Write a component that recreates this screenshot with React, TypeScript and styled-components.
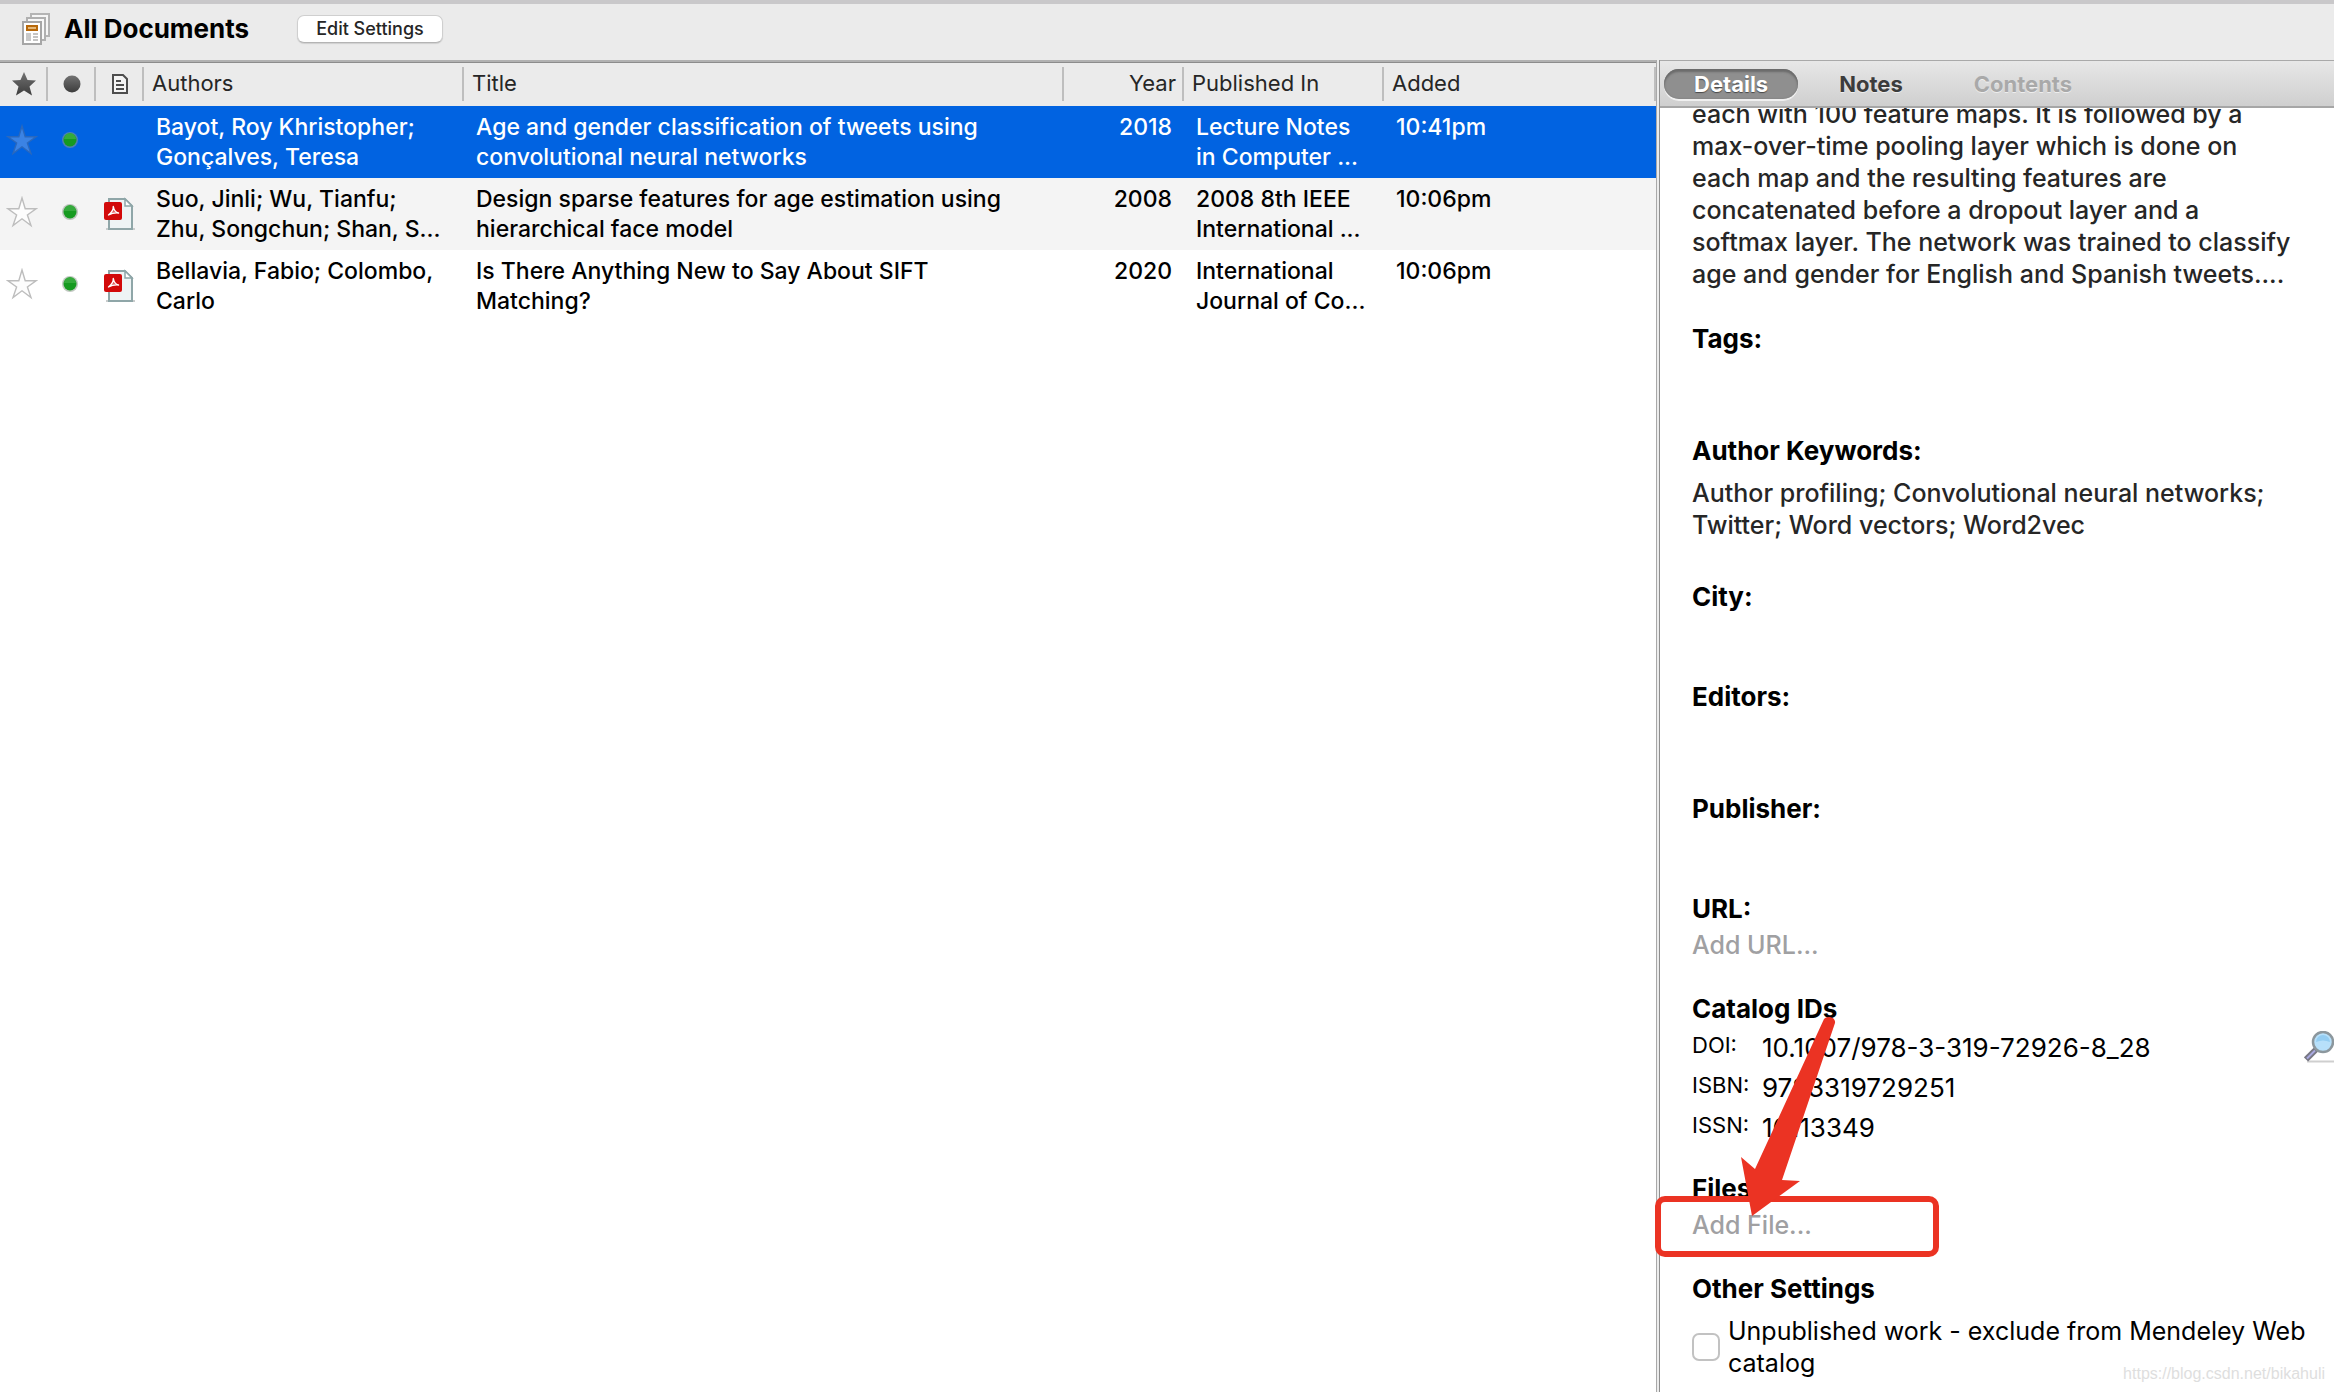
import React from "react";
import styled, { createGlobalStyle, css } from "styled-components";

const UI_FONT = `Inter, "Liberation Sans", sans-serif`;
const HELVETICA = `"Liberation Sans", Arial, sans-serif`;
const RED = "#eb3323";

const GlobalStyle = createGlobalStyle`
  *, *::before, *::after { box-sizing: border-box; }
  html, body { margin: 0; background: #fff; }
  body { font-family: ${UI_FONT}; color: #000; }
  button, input { font: inherit; color: inherit; }
  h1, h2, p { margin: 0; font-weight: inherit; font-size: inherit; }
`;

const Window = styled.div`
  height: 100vh;
  display: flex;
  flex-direction: column;
  overflow: hidden;
  position: relative;
`;

const Toolbar = styled.header`
  flex: none;
  height: 60px;
  padding: 0 20px 6px 22px;
  display: flex;
  align-items: center;
  background: #ebebeb;
  border-top: 4px solid #c9c8ca;
`;

const ToolbarTitle = styled.h1`
  margin: 0 48px 0 13px;
  font-size: 26px;
  line-height: 32px;
  font-weight: 700;
`;

const PushButton = styled.button`
  height: 28px;
  padding: 0 18px;
  border: 1px solid #cfcfcf;
  border-bottom-color: #b4b4b4;
  border-radius: 7px;
  background: #fff;
  box-shadow: 0 1px 1px rgba(0, 0, 0, 0.12);
  color: #262626;
  font-size: 18px;
  line-height: 24px;
  font-weight: 500;
`;

const Body = styled.main`
  flex: 1;
  min-height: 0;
  display: grid;
  grid-template-columns: minmax(0, 1fr) 4px 674px;
`;

const ListPane = styled.section`
  border-top: 2px solid #b1b1b1;
  min-width: 0;
`;

const Splitter = styled.div`
  border-left: 1px solid #a9a9a9;
  border-right: 1px solid #8f8f8f;
  background: #ececec;
`;

const DocTable = styled.table`
  width: 100%;
  table-layout: fixed;
  border-collapse: collapse;
  border-top: 1px solid #8c8c8c;
`;

const Col = styled.col<{ $w?: number }>`
  ${(p) => p.$w && css`width: ${p.$w}px;`}
`;

const HeadCell = styled.th<{ $align?: "left" | "right" | "center" }>`
  padding: 4px 0 5px;
  background: #ebebeb;
  font-size: 22px;
  font-weight: 400;
  color: #262626;
  text-align: ${(p) => p.$align ?? "left"};
`;

const HeadInner = styled.div<{ $icon?: boolean }>`
  height: 34px;
  line-height: 32px;
  padding: 0 6px 0 8px;
  border-right: 2px solid #bebebe;
  ${(p) =>
    p.$icon &&
    css`
      padding: 0 0 0 2px;
      display: flex;
      align-items: center;
      justify-content: center;
    `}
`;

const Row = styled.tr<{ $tone: "selected" | "alt" | "plain" }>`
  height: 72px;
  background: ${(p) => ({ selected: "#0163e1", alt: "#f4f4f4", plain: "#fff" })[p.$tone]};
  color: ${(p) => (p.$tone === "selected" ? "#fff" : "#000")};
`;

const Cell = styled.td<{ $align?: "left" | "right" }>`
  padding: 6px 12px;
  vertical-align: top;
  font-size: 23px;
  line-height: 30px;
  font-weight: 500;
  text-align: ${(p) => p.$align ?? "left"};
  white-space: nowrap;
`;

const IconCell = styled.td<{ $raised?: boolean }>`
  padding: ${(p) => (p.$raised ? "0 4px 4px 0" : "0")};
  vertical-align: middle;
  text-align: center;
  svg { display: block; margin: 0 auto; }
`;

const StarButton = styled.button`
  display: block;
  padding: 0 0 0 6px;
  border: 0;
  background: none;
`;

const Line = styled.span`
  display: block;
`;

const DetailPane = styled.aside`
  min-width: 0;
  min-height: 0;
  display: flex;
  flex-direction: column;
`;

const TabBar = styled.nav`
  flex: none;
  height: 48px;
  display: flex;
  align-items: center;
  gap: 11px;
  padding: 0 4px;
  border-top: 1px solid #a9a9a9;
  border-bottom: 2px solid #a6a6a6;
  background: linear-gradient(#e7e7e7, #cfcfcf);
`;

const Tab = styled.button<{ $state: "active" | "idle" | "off" }>`
  height: 30px;
  padding: 0 30px;
  border: 0;
  border-radius: 15px;
  background: none;
  font-size: 22px;
  line-height: 30px;
  font-weight: 700;
  color: #3c3c3c;
  text-shadow: 0 1px 0 rgba(255, 255, 255, 0.6);
  ${(p) =>
    p.$state === "active" &&
    css`
      color: #fff;
      background: #8f8f8f;
      text-shadow: 0 1px 1px rgba(0, 0, 0, 0.5);
      box-shadow: inset 0 3px 2px #6c6c6c, inset 0 0 2px #777, 0 2px 0 #f0f0f0;
    `}
  ${(p) => p.$state === "off" && css`color: #a9a9a9;`}
`;

/* Reaches over the splitter so that call-outs may overlap it. */
const Scroller = styled.div`
  flex: 1;
  min-height: 0;
  margin-left: -8px;
  padding-left: 8px;
  overflow: hidden;
  position: relative;
`;

const Fields = styled.div`
  margin-top: -10px;
  padding-left: 32px;
`;

const bodyText = css`
  font-size: 25px;
  line-height: 32px;
  font-weight: 450;
`;

const Paragraph = styled.p`
  ${bodyText}
  color: #262626;
  white-space: nowrap;
`;

const Field = styled.section<{ $after: number }>`
  padding-bottom: ${(p) => p.$after}px;
`;

const FieldTitle = styled.h2<{ $gap?: number }>`
  font-size: 26px;
  line-height: 32px;
  font-weight: 700;
  margin-bottom: ${(p) => p.$gap ?? 0}px;
`;

const Abstract = styled.section`
  padding-bottom: 33px;
`;

const AddButton = styled.button`
  display: block;
  padding: 0;
  border: 0;
  background: none;
  ${bodyText}
  color: #a0a0a2;
`;

const IdRow = styled.div`
  height: 40px;
  padding-bottom: 2px;
  display: grid;
  grid-template-columns: 70px 1fr auto;
  align-items: center;
`;

const IdLabel = styled.label`
  font-size: 22px;
  line-height: 32px;
  padding-bottom: 6px;
`;

const IdInput = styled.input`
  width: 100%;
  height: 32px;
  padding: 0;
  border: 0;
  outline: 0;
  background: transparent;
  font-size: 26px;
  line-height: 32px;
`;

const LookupButton = styled.button`
  padding: 0 0 2px;
  border: 0;
  background: none;
  svg { display: block; }
`;

const CheckLine = styled.div`
  display: grid;
  grid-template-columns: 28px 1fr;
  column-gap: 8px;
  align-items: center;
`;

const Check = styled.input`
  appearance: none;
  width: 28px;
  height: 28px;
  margin: 0;
  border: 2px solid #c2c2c2;
  border-radius: 7px;
  background: #fff;
`;

const CheckLabel = styled.label`
  font-size: 25px;
  line-height: 32px;
  white-space: nowrap;
`;

const AddFileWrap = styled.div`
  position: relative;
`;

const Highlight = styled.div`
  position: absolute;
  left: -37px;
  top: -13px;
  width: 284px;
  height: 61px;
  border: 6px solid ${RED};
  border-radius: 10px;
  pointer-events: none;
`;

const ArrowMark = styled.svg`
  position: absolute;
  left: 48px;
  top: -194px;
  pointer-events: none;
`;

const Watermark = styled.span`
  position: absolute;
  right: 9px;
  bottom: 6px;
  font-family: ${HELVETICA};
  font-size: 16px;
  line-height: 24px;
  color: #dedede;
`;

const LibraryIcon = () => (
  <svg width="29" height="32" viewBox="0 0 29 32" aria-hidden="true">
    <rect x="9" y="1" width="18" height="22" fill="#f6f6f6" stroke="#b4b4b4" strokeWidth="2" />
    <rect x="12" y="4" width="12" height="4" fill="#b27a3c" />
    <rect x="5" y="5" width="18" height="22" fill="#f8f8f8" stroke="#b0b0b0" strokeWidth="2" />
    <rect x="8" y="8" width="12" height="4" fill="#5a9bb8" />
    <rect x="1" y="9" width="18" height="22" fill="#fff" stroke="#a6a6a6" strokeWidth="2" />
    <rect x="4" y="12" width="12" height="6" fill="#b8690b" />
    <path d="M6 15h8" stroke="#e5b878" strokeWidth="2" />
    <rect x="4" y="20" width="5" height="8" fill="#c9c9c9" />
    <path d="M11 21h5M11 24h5M11 27h5" stroke="#c4c4c4" strokeWidth="2" />
  </svg>
);

const HeadStar = () => (
  <svg width="24" height="24" viewBox="0 0 24 24" role="img" aria-label="Favourite">
    <defs>
      <linearGradient id="dk" x1="0" y1="0" x2="0" y2="1">
        <stop offset="0" stopColor="#727272" />
        <stop offset="1" stopColor="#3c3c3c" />
      </linearGradient>
    </defs>
    <path d="M12 0l3.500 8 8.500.6-6.500 5.800 2.500 9L12 18.600 4 23.400l2.500-9L0 8.600 8.500 8z" fill="url(#dk)" />
  </svg>
);

const HeadDot = () => (
  <svg width="18" height="18" viewBox="0 0 18 18" role="img" aria-label="Read status">
    <circle cx="9" cy="9" r="8.500" fill="url(#dk)" />
  </svg>
);

const HeadDoc = () => (
  <svg width="16" height="20" viewBox="0 0 16 20" role="img" aria-label="File">
    <path d="M1 1h10l4 4v14H1z" fill="#f4f4f4" stroke="#4d4d4d" strokeWidth="2" />
    <path d="M4 7h5M4 11h8M4 15h8" stroke="#4d4d4d" strokeWidth="2" />
  </svg>
);

const RowStar = ({ selected }: { selected?: boolean }) => (
  <svg width="32" height="32" viewBox="0 0 32 32" aria-hidden="true">
    <path
      d="M16 2l3.200 10.800H30l-8.600 6.200 3.600 10.500-9-6.700-9 6.700L10.600 19 2 12.800h10.800z"
      fill={selected ? "#3b83e4" : "#fdfdfd"}
      stroke={selected ? "#2a68bd" : "#bdbdbd"}
      strokeWidth="1.400"
    />
  </svg>
);

const GreenDot = () => (
  <svg width="18" height="18" viewBox="0 0 18 18" role="img" aria-label="Unread">
    <circle cx="9" cy="9" r="8" fill="#8d9a8d" opacity="0.55" />
    <circle cx="9" cy="9" r="6.500" fill="#169a20" />
    <path d="M3 8a6 6 0 0 1 12 0z" fill="#35aa3c" />
  </svg>
);

const PdfIcon = () => (
  <svg width="32" height="34" viewBox="0 0 32 34" role="img" aria-label="PDF">
    <path d="M2 32h29" stroke="#c9cccc" strokeWidth="2" />
    <path d="M5 2h16l7 7v23H5z" fill="#eef4f5" stroke="#8fa6a8" strokeWidth="2" />
    <path d="M21 2v7h7z" fill="#fff" stroke="#8fa6a8" strokeWidth="1.500" />
    <rect x="0" y="5" width="18" height="18" rx="2" fill="#d20a0a" />
    <path
      d="M4.500 18c2.500-2 5-5.500 4.800-8.500C10 13.500 12 15.500 14.500 16c-3.500-.4-7 .4-10 2z"
      fill="#fff"
      fillOpacity="0.35"
      stroke="#fff"
      strokeWidth="1.400"
      strokeLinejoin="round"
    />
  </svg>
);

const Magnifier = () => (
  <svg width="30" height="32" viewBox="0 0 30 32" aria-hidden="true">
    <path d="M3 30.500h27" stroke="#cfcfcf" strokeWidth="2" />
    <path d="M2 28.500l10-10" stroke="#777783" strokeWidth="6" />
    <path d="M3 27.500l8-8" stroke="#a9a9e0" strokeWidth="2" />
    <circle cx="19" cy="11" r="10" fill="#b7e0fa" stroke="#8c979d" strokeWidth="2.500" />
    <path d="M12 11a7 7 0 0 1 14 0q-7-3-14 0z" fill="#94cdf2" />
  </svg>
);

const Arrow = () => (
  <ArrowMark width="100" height="204" viewBox="0 0 100 204" aria-hidden="true">
    <path d="M12 201 1 142 15 154 84 4C87 0 96 2 95 8L42 165 60 166Z" fill={RED} />
  </ArrowMark>
);

type Doc = {
  authors: string[];
  title: string[];
  year: string;
  published: string[];
  added: string;
  tone: "selected" | "alt" | "plain";
  pdf: boolean;
};

const DOCS: Doc[] = [
  {
    authors: ["Bayot, Roy Khristopher;", "Gonçalves, Teresa"],
    title: ["Age and gender classification of tweets using", "convolutional neural networks"],
    year: "2018",
    published: ["Lecture Notes", "in Computer ..."],
    added: "10:41pm",
    tone: "selected",
    pdf: false,
  },
  {
    authors: ["Suo, Jinli; Wu, Tianfu;", "Zhu, Songchun; Shan, S..."],
    title: ["Design sparse features for age estimation using", "hierarchical face model"],
    year: "2008",
    published: ["2008 8th IEEE", "International ..."],
    added: "10:06pm",
    tone: "alt",
    pdf: true,
  },
  {
    authors: ["Bellavia, Fabio; Colombo,", "Carlo"],
    title: ["Is There Anything New to Say About SIFT", "Matching?"],
    year: "2020",
    published: ["International", "Journal of Co..."],
    added: "10:06pm",
    tone: "plain",
    pdf: true,
  },
];

const ABSTRACT = [
  "each with 100 feature maps. It is followed by a",
  "max-over-time pooling layer which is done on",
  "each map and the resulting features are",
  "concatenated before a dropout layer and a",
  "softmax layer. The network was trained to classify",
  "age and gender for English and Spanish tweets....",
];

const KEYWORDS = [
  "Author profiling; Convolutional neural networks;",
  "Twitter; Word vectors; Word2vec",
];

const IDS = [
  { id: "doi", label: "DOI:", value: "10.1007/978-3-319-72926-8_28", lookup: true },
  { id: "isbn", label: "ISBN:", value: "9783319729251" },
  { id: "issn", label: "ISSN:", value: "16113349" },
];

const Lines = ({ items }: { items: string[] }) => (
  <>
    {items.map((t) => (
      <Line key={t}>{t}</Line>
    ))}
  </>
);

export default function App() {
  return (
    <>
      <GlobalStyle />
      <Window>
        <Toolbar>
          <LibraryIcon />
          <ToolbarTitle>All Documents</ToolbarTitle>
          <PushButton type="button">Edit Settings</PushButton>
        </Toolbar>
        <Body>
          <ListPane>
            <DocTable>
              <colgroup>
                <Col $w={48} />
                <Col $w={48} />
                <Col $w={48} />
                <Col $w={320} />
                <Col $w={600} />
                <Col $w={120} />
                <Col $w={200} />
                <Col />
              </colgroup>
              <thead>
                <tr>
                  <HeadCell><HeadInner $icon><HeadStar /></HeadInner></HeadCell>
                  <HeadCell><HeadInner $icon><HeadDot /></HeadInner></HeadCell>
                  <HeadCell><HeadInner $icon><HeadDoc /></HeadInner></HeadCell>
                  <HeadCell><HeadInner>Authors</HeadInner></HeadCell>
                  <HeadCell><HeadInner>Title</HeadInner></HeadCell>
                  <HeadCell $align="right"><HeadInner>Year</HeadInner></HeadCell>
                  <HeadCell><HeadInner>Published In</HeadInner></HeadCell>
                  <HeadCell><HeadInner>Added</HeadInner></HeadCell>
                </tr>
              </thead>
              <tbody>
                {DOCS.map((d) => (
                  <Row key={d.title[0]} $tone={d.tone}>
                    <IconCell $raised>
                      <StarButton type="button" aria-label="Toggle favourite">
                        <RowStar selected={d.tone === "selected"} />
                      </StarButton>
                    </IconCell>
                    <IconCell $raised><GreenDot /></IconCell>
                    <IconCell>{d.pdf && <PdfIcon />}</IconCell>
                    <Cell><Lines items={d.authors} /></Cell>
                    <Cell><Lines items={d.title} /></Cell>
                    <Cell $align="right">{d.year}</Cell>
                    <Cell><Lines items={d.published} /></Cell>
                    <Cell>{d.added}</Cell>
                  </Row>
                ))}
              </tbody>
            </DocTable>
          </ListPane>
          <Splitter />
          <DetailPane>
            <TabBar>
              <Tab type="button" $state="active">Details</Tab>
              <Tab type="button" $state="idle">Notes</Tab>
              <Tab type="button" $state="off" disabled>Contents</Tab>
            </TabBar>
            <Scroller>
              <Fields>
                <Abstract>
                  <Paragraph><Lines items={ABSTRACT} /></Paragraph>
                </Abstract>
                <Field $after={80}><FieldTitle>Tags:</FieldTitle></Field>
                <Field $after={40}>
                  <FieldTitle $gap={10}>Author Keywords:</FieldTitle>
                  <Paragraph><Lines items={KEYWORDS} /></Paragraph>
                </Field>
                <Field $after={68}><FieldTitle>City:</FieldTitle></Field>
                <Field $after={80}><FieldTitle>Editors:</FieldTitle></Field>
                <Field $after={68}><FieldTitle>Publisher:</FieldTitle></Field>
                <Field $after={32}>
                  <FieldTitle $gap={4}>URL:</FieldTitle>
                  <AddButton type="button">Add URL...</AddButton>
                </Field>
                <Field $after={24}>
                  <FieldTitle $gap={4}>Catalog IDs</FieldTitle>
                  {IDS.map((r) => (
                    <IdRow key={r.id}>
                      <IdLabel htmlFor={r.id}>{r.label}</IdLabel>
                      <IdInput id={r.id} defaultValue={r.value} />
                      {r.lookup && (
                        <LookupButton type="button" aria-label="Look up by DOI">
                          <Magnifier />
                        </LookupButton>
                      )}
                    </IdRow>
                  ))}
                </Field>
                <Field $after={32}>
                  <FieldTitle $gap={4}>Files:</FieldTitle>
                  <AddFileWrap>
                    <AddButton type="button">Add File...</AddButton>
                    <Highlight />
                    <Arrow />
                  </AddFileWrap>
                </Field>
                <Field $after={0}>
                  <FieldTitle $gap={10}>Other Settings</FieldTitle>
                  <CheckLine>
                    <Check type="checkbox" id="unpublished" />
                    <CheckLabel htmlFor="unpublished">
                      Unpublished work - exclude from Mendeley Web
                      <br />
                      catalog
                    </CheckLabel>
                  </CheckLine>
                </Field>
              </Fields>
            </Scroller>
          </DetailPane>
        </Body>
        <Watermark>https://blog.csdn.net/bikahuli</Watermark>
      </Window>
    </>
  );
}
